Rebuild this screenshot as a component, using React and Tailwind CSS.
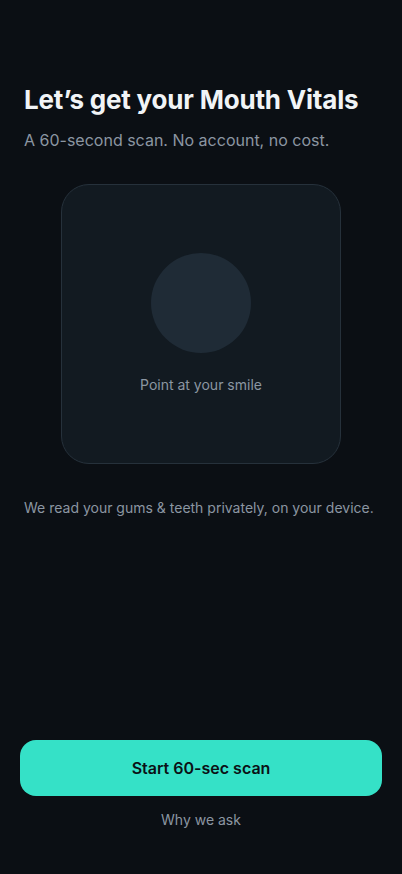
import React from 'react';

export default function App() {
  return (
    <div
      className="h-[874px] w-full bg-[#0b0f14] flex flex-col text-white"
      style={{ fontFamily: 'Inter, "Noto Sans", sans-serif' }}
    >
      {/* Header */}
      <div className="px-6 pt-[84px]">
        <h1 className="text-[26px] leading-[32px] font-bold text-[#f1f4f6] tracking-[-0.2px]">
          Let’s get your Mouth Vitals
        </h1>
        <p className="mt-3 text-[16px] leading-[24px] text-[#8b96a2]">
          A 60-second scan. No account, no cost.
        </p>
      </div>

      {/* Camera preview */}
      <div className="mt-8 flex justify-center">
        <div className="w-[280px] h-[280px] rounded-[28px] border border-[#26313b] bg-[#121a21] flex flex-col items-center justify-center gap-[22px]">
          <div className="w-[100px] h-[100px] rounded-full bg-[#1f2b36]" />
          <p className="text-[14px] leading-[20px] text-[#8b96a2]">Point at your smile</p>
        </div>
      </div>

      <p className="mt-[34px] px-6 text-[14px] leading-[20px] text-[#8b96a2]">
        We read your gums &amp; teeth privately, on your device.
      </p>

      {/* Actions */}
      <div className="mt-auto px-5 pb-[44px] flex flex-col items-center">
        <button
          type="button"
          className="w-full h-[56px] rounded-[16px] bg-[#35e1c7] text-[#0b1116] text-[16px] font-semibold"
        >
          Start 60-sec scan
        </button>
        <button type="button" className="mt-[14px] text-[14px] leading-[20px] text-[#8b96a2]">
          Why we ask
        </button>
      </div>
    </div>
  );
}
